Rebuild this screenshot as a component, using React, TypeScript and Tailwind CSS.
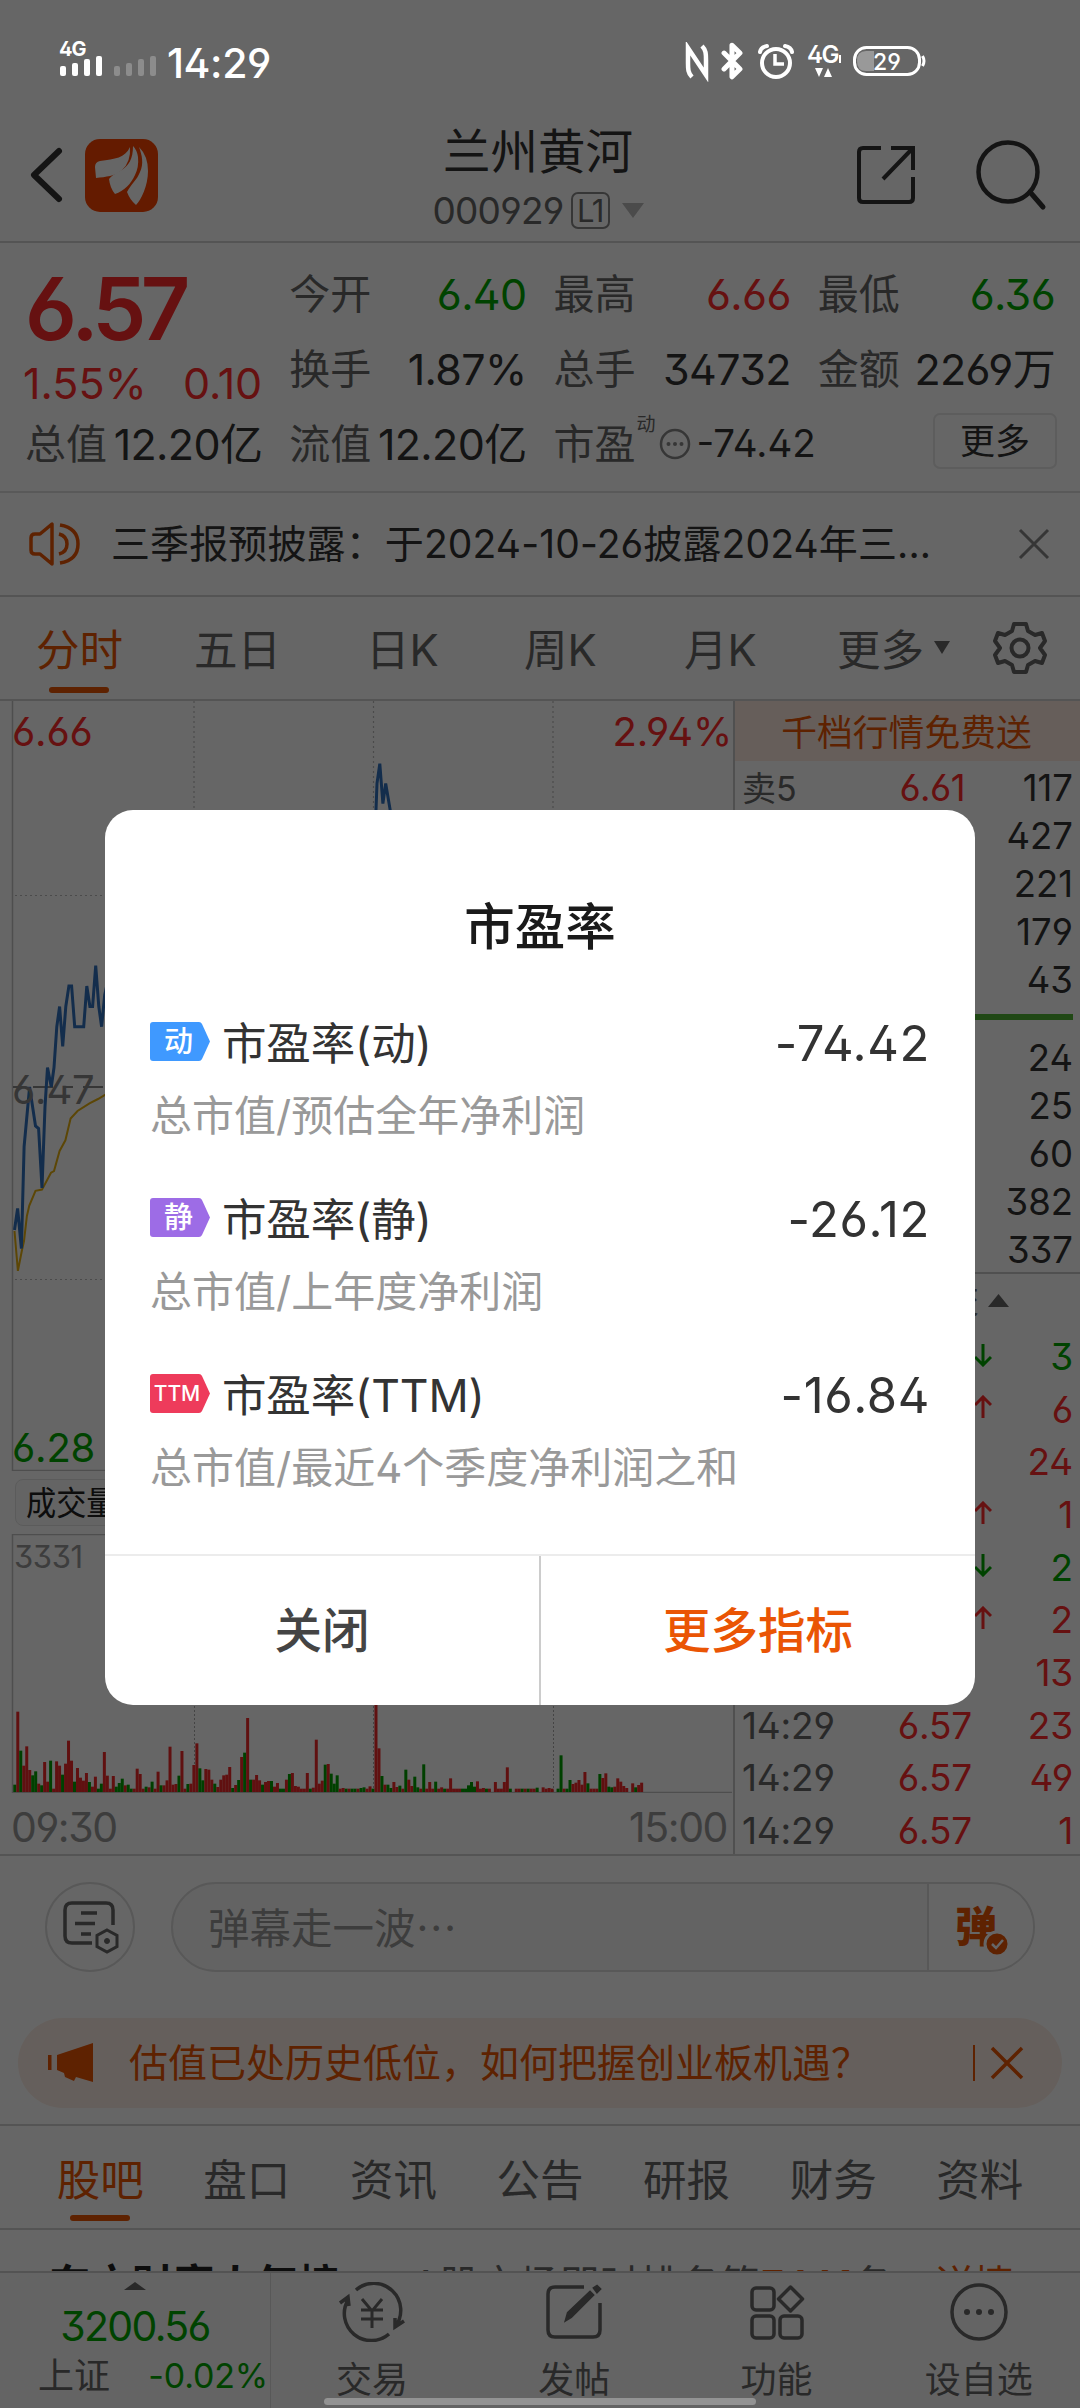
import { ChevronLeft, Bluetooth } from "lucide-react";
import type { ReactNode } from "react";

// one entry per minute: r = up, g = down, - = no trade, number = height in thirds of a px
const VOLUME = `g22 r241 g124 r79 r137 r66 g50 g62 r25 g20 r90 r31 g94 r10 r92 r79 g52 r85 r154 r94
g31 r72 r43 r34 r57 g30 r16 r46 g10 g25 r120 r49 r10 r48 g16 g27 g40 r20 g22 g10 r10 r70 r54 r10
g16 r14 g31 r10 r61 g20 r20 r35 r136 r22 r24 g49 r123 r10 g24 r25 r81 r146 g71 g35 r69 r67 r37 g25
r15 r37 r50 r52 r75 g12 r21 g36 r105 g118 r222 g37 r37 r51 r35 g22 r30 r33 g33 r16 r27 g10 g10 r37
g54 r57 r18 r16 r10 r10 r57 g10 r13 r157 r25 r34 g82 r84 g55 g25 g50 r10 r12 g10 r10 g10 g10 r10 g12
g14 r10 r17 g10 r420 r131 g48 r22 g22 g12 r30 r15 g19 r10 g67 r37 r18 g46 g14 r10 g83 r10 r30 r10
g31 r10 r14 g10 r10 r41 r10 r10 r10 g10 g10 g20 g30 g16 r32 r10 r12 g10 r10 - r30 r10 r10 r30 r74
g10 - r10 r10 g10 r10 g10 r10 r10 g13 - r14 r10 r12 r10 - g10 g110 r10 g10 g36 r24 r28 r36 r22 r60
g26 r10 r10 r10 g54 r42 r56 g16 g14 r16 r41 r31 r18 r12 - r26 g14 r21 r28`.split(/\s+/);

const PRICE_OPEN =
  "14.5,1230 17.6,1208.5 21.4,1248.5 24.1,1146.6 29.6,1087 35.5,1126 38.6,1128.6 42,1188 45,1106.7 47.5,1067.5 51.3,1087 54,1067.5 56.8,1026.7 59.6,1006.5 62.7,1046.5 65.8,1006.5 68.9,986 71.6,986 74.7,1026.7 83.7,1026.7 86.8,986 89.9,1006.5 92.6,1006.5 95.7,965.7 98.8,1006.5 101.6,1026.7 104.7,995 108,980";
const PRICE_NOON = "375,850 376,810 377,783.4 379.8,763.7 382.9,803.6 385.7,783.4 390.5,812 394,850";
const AVERAGE =
  "14.5,1231 17.9,1270.8 22,1250 24,1241 26.9,1216 29.3,1205.6 35.5,1190.8 42,1189.6 51,1172.7 54,1171 59.6,1151 65.4,1140.3 70.6,1118.5 77.5,1111 89.5,1103.3 98,1099 105,1095 112,1092";

const ASKS = [
  ["卖5", "6.61", "117"],
  ["卖4", "6.60", "427"],
  ["卖3", "6.59", "221"],
  ["卖2", "6.58", "179"],
  ["卖1", "6.57", "43"],
];
const BIDS = [
  ["买1", "6.56", "24"],
  ["买2", "6.55", "25"],
  ["买3", "6.54", "60"],
  ["买4", "6.53", "382"],
  ["买5", "6.52", "337"],
];
const TICKS = [
  { price: "6.56", dir: "down", vol: "3" },
  { price: "6.57", dir: "up", vol: "6" },
  { price: "6.56", dir: "", vol: "24" },
  { price: "6.57", dir: "up", vol: "1" },
  { price: "6.56", dir: "down", vol: "2" },
  { price: "6.57", dir: "up", vol: "2" },
  { price: "6.57", dir: "", vol: "13" },
  { price: "6.57", dir: "", vol: "23" },
  { price: "6.57", dir: "", vol: "49" },
  { price: "6.57", dir: "", vol: "1" },
];

const RATIOS = [
  { tag: "动", color: "#3f99ff", name: "市盈率(动)", value: "-74.42", desc: "总市值/预估全年净利润" },
  { tag: "静", color: "#9d6ce6", name: "市盈率(静)", value: "-26.12", desc: "总市值/上年度净利润" },
  { tag: "TTM", color: "#ee3b5b", name: "市盈率(TTM)", value: "-16.84", desc: "总市值/最近4个季度净利润之和" },
];

function Stat({ label, value, color = "text-[#333]" }: { label: string; value: string; color?: string }) {
  return (
    <div className="flex h-[75px] items-center justify-between whitespace-nowrap">
      <span className="text-[41px] text-[#666]">{label}</span>
      <span className={`text-[43px] tracking-[-0.015em] ${color}`}>{value}</span>
    </div>
  );
}

function StatusBar() {
  return (
    <div className="relative z-10 flex h-[110px] items-start text-white">
      <svg className="ml-[58px] mt-[36px]" width="100" height="42" viewBox="58 36 100 42" fill="#fff">
        <text x="59" y="56" fontSize="20" fontWeight="700" letterSpacing="-1">4G</text>
        <rect x="60" y="66" width="6" height="10" rx="2" />
        <rect x="72" y="63" width="6" height="13" rx="2" />
        <rect x="84" y="59" width="6" height="17" rx="2" />
        <rect x="96" y="56" width="6" height="20" rx="2" />
        <g fill="#8c8c8c">
          <rect x="114" y="66" width="6" height="10" rx="2" />
          <rect x="126" y="63" width="6" height="13" rx="2" />
          <rect x="138" y="59" width="6" height="17" rx="2" />
          <rect x="150" y="56" width="6" height="20" rx="2" />
        </g>
      </svg>
      <span className="ml-[9px] mt-[38px] w-[110px] text-[41px] font-medium leading-[50px] tracking-[-0.01em]">14:29</span>
      <svg className="ml-[406px] mt-[42px]" width="28" height="40" viewBox="683 42 28 40" fill="none" stroke="#fff" strokeWidth="4.5">
        <path d="M692 77c-4-4-4-8-4-14V48l18 27V60c0-6 0-10-4-14" />
      </svg>
      <Bluetooth className="ml-[2px] mt-[42px]" size={38} strokeWidth={3.2} />
      <svg className="ml-[5px] mt-[42px]" width="176" height="40" viewBox="758 42 176 40" fill="none" stroke="#fff">
        <circle cx="778" cy="63" r="14" strokeWidth="4" />
        <path d="M777 54v10h9" strokeWidth="3.5" />
        <path d="M762 52q1-5 7-6M794 52q-1-5-7-6" strokeWidth="4" strokeLinecap="round" />
        <text x="809" y="63" fontSize="24" fontWeight="600" letterSpacing="-1.5" fill="#fff" stroke="none">4G</text>
        <path d="M842 55v8" strokeWidth="2" />
        <path d="M817 68h8l-4 9zM826 77h8l-4-9z" fill="#fff" stroke="none" />
        <path d="M876 51h-8q-9 0-9 10t9 10h8z" fill="#999" stroke="none" />
        <rect x="856.500" y="47.500" width="65" height="27" rx="12" strokeWidth="3" />
        <path d="M924.500 56q3 5 0 10" strokeWidth="3" />
        <text x="889" y="69.500" fontSize="23" fontWeight="500" textAnchor="middle" fill="#fff" stroke="none">29</text>
      </svg>
    </div>
  );
}

function Header() {
  return (
    <div className="flex h-[133px] items-start border-b-2 border-[#d2d2d2]">
      <svg className="ml-[28px] mt-[36px]" width="36" height="58" viewBox="0 0 36 58" fill="none" stroke="#333" strokeWidth="6">
        <path d="M31 5 6 29l25 24" strokeLinecap="round" strokeLinejoin="round" />
      </svg>
      <svg className="ml-[21px] mt-[29px]" width="73" height="73" viewBox="0 0 73 73">
        <rect width="73" height="73" rx="15" fill="#fa4500" />
        <g fill="#fff">
          <path d="M45 8C40 19 30 20 15 22q-5 1-5 6l1 11c10-1 19-2 26-8q9-8 8-23z" />
          <path d="M48 7c0 13-4 20-13 25q-8 4-11 8 1 9 6 15c9-3 16-10 20-19q4-8 3-18-1-7-5-11z" />
          <path d="M54 8c3 8 5 17 1 25-3 8-9 12-13 20q3 8 9 13c5-5 12-19 12-34q0-15-9-24z" />
        </g>
      </svg>
      <div className="ml-[246px] mt-[18px] flex w-[268px] flex-col items-center">
        <h1 className="text-[47.500px] leading-[48px] text-[#333]">兰州黄河</h1>
        <div className="mt-[16px] flex h-[38px] items-center">
          <span className="text-[37px] tracking-[-0.02em] text-[#666]">000929</span>
          <span className="ml-[7px] flex h-[37px] w-[39px] items-center justify-center rounded-[7px] border-2 border-[#888] text-[31px] tracking-[-0.04em] text-[#666]">
            L1
          </span>
          <svg className="ml-[12px]" width="22" height="15" viewBox="0 0 22 15"><path d="M0 0h22L11 15z" fill="#bbb" /></svg>
        </div>
      </div>
      <svg className="ml-[184px] mt-[35px]" width="60" height="60" viewBox="857 145 60 60" fill="none" stroke="#333" strokeWidth="4">
        <path d="M882 148H864q-4 0-4 4v46q0 4 4 4h46q4 0 4-4v-21M892 148h22v22M913 149l-29 30" />
      </svg>
      <svg className="ml-[59px] mt-[29px]" width="74" height="74" viewBox="976 139 74 74" fill="none" stroke="#333" strokeWidth="4.500">
        <circle cx="1009" cy="172" r="29.500" />
        <path d="m1031 192 13 15" strokeWidth="5" strokeLinecap="round" />
      </svg>
    </div>
  );
}

function Quote() {
  return (
    <div className="grid h-[250px] grid-cols-4 gap-x-[27px] border-b-2 border-[#dedede] px-[25px] pt-[14px]">
      <div className="flex flex-col">
        <div className="h-[102px] pt-px text-[86px] font-semibold leading-[102px] tracking-[-0.065em] text-[#ff2b2b]">6.57</div>
        <div className="flex h-[48px] items-center justify-between text-[43px] text-[#ff2b2b]">
          <span className="-ml-[2px]">1.55%</span>
          <span>0.10</span>
        </div>
        <Stat label="总值" value="12.20亿" />
      </div>
      <div>
        <Stat label="今开" value="6.40" color="text-[#00a800]" />
        <Stat label="换手" value="1.87%" />
        <Stat label="流值" value="12.20亿" />
      </div>
      <div>
        <Stat label="最高" value="6.66" color="text-[#ff2b2b]" />
        <Stat label="总手" value="34732" />
        <div className="flex h-[75px] items-center whitespace-nowrap">
          <span className="text-[41px] text-[#666]">市盈</span>
          <span className="mb-[38px] ml-px text-[19px] text-[#666]">动</span>
          <svg className="ml-[3px] shrink-0" width="32" height="32" viewBox="0 0 32 32" fill="#888">
            <circle cx="16" cy="16" r="14" fill="none" stroke="#888" strokeWidth="2.500" />
            <circle cx="9.500" cy="16" r="2" /><circle cx="16" cy="16" r="2" /><circle cx="22.500" cy="16" r="2" />
          </svg>
          <span className="ml-[6px] text-[38.500px] text-[#333]">-74.42</span>
        </div>
      </div>
      <div>
        <Stat label="最低" value="6.36" color="text-[#00a800]" />
        <Stat label="金额" value="2269万" />
        <div className="flex h-[68px] items-center justify-end">
          <button className="-mr-[2px] h-[56px] w-[124px] rounded-[7px] border-2 border-[#e8e8e8] text-[35px] leading-[48px] text-[#333]">更多</button>
        </div>
      </div>
    </div>
  );
}

function Notice() {
  return (
    <div className="flex h-[105px] items-center border-b-2 border-[#d2d2d2]">
      <svg className="ml-[28px]" width="54" height="48" viewBox="0 0 54 48" fill="none" stroke="#ea5504" strokeWidth="3.500">
        <path d="M24 4v40L12 34H7q-4 0-4-4V18q0-4 4-4h5z" strokeLinejoin="round" />
        <path d="M31 14q8 2 8 10t-8 10M32 5q18 3 18 19T32 43" />
      </svg>
      <span className="ml-[29px] w-[860px] whitespace-nowrap text-[39px] tracking-[0.003em] text-[#333]">
        三季报预披露：于2024-10-26披露2024年三...
      </span>
      <svg className="ml-[47px]" width="32" height="32" viewBox="0 0 32 32" stroke="#888" strokeWidth="3"><path d="m2 2 28 28M30 2 2 30" /></svg>
    </div>
  );
}

function PeriodTabs() {
  return (
    <div className="flex h-[104px] items-center border-b-2 border-[#d2d2d2] pt-[4px] text-[43.500px] text-[#666]">
      <div className="relative ml-[36px] w-[158px] leading-[90px] text-[#ea5504]">
        分时
        <span className="absolute bottom-[2px] left-[13px] h-[6px] w-[60px] rounded-full bg-[#ea5504]" />
      </div>
      <span className="w-[172px]">五日</span>
      <span className="w-[158px]">日K</span>
      <span className="w-[160px]">周K</span>
      <span className="w-[153px]">月K</span>
      <span className="w-[97px]">更多</span>
      <svg className="-mt-[6px]" width="16" height="13" viewBox="0 0 16 13" fill="#666"><path d="M0 0h16L8 13z" /></svg>
      <svg className="-mt-[4px] ml-[42px]" width="56" height="56" viewBox="-28 -28 56 56" fill="none" stroke="#666" strokeWidth="4">
        <path d="M-6-24H6l2 7 7 4 7-2 3 8-5 7 5 7-3 8-7-2-7 4-2 7H-6l-2-7-7-4-7 2-3-8 5-7-5-7 3-8 7 2 7-4z" strokeLinejoin="round" />
        <circle r="8.500" />
      </svg>
    </div>
  );
}

function PriceChart() {
  return (
    <svg className="block" width="733" height="770" viewBox="0 701 733 770" fill="none">
      <g stroke="#bbb" strokeWidth="1.200" strokeDasharray="2 3">
        <path d="M194 701v770M373.500 701v770M553 701v770M15 895.500h719M15 1279.500h719" />
      </g>
      <path d="M12.500 701v769.500H732" stroke="#c4c4c4" strokeWidth="1.500" />
      <path d="M13 1087H734" stroke="#888" strokeWidth="2" strokeDasharray="10 10 20 10" />
      <polyline points={AVERAGE} stroke="#e5b010" strokeWidth="2" />
      <polyline points={PRICE_OPEN} stroke="#3070bd" strokeWidth="3" />
      <polyline points={PRICE_NOON} stroke="#3070bd" strokeWidth="3" />
      <g fontSize="40" letterSpacing="-.2">
        <text x="12" y="746" fill="#ff2b2b">6.66</text>
        <text x="732" y="746" fill="#ff2b2b" textAnchor="end">2.94%</text>
        <text x="12" y="1104" fill="#888">6.47</text>
        <text x="12" y="1462" fill="#00a800">6.28</text>
      </g>
    </svg>
  );
}

function VolumeChart() {
  return (
    <svg className="block" width="733" height="259" viewBox="0 1534 733 259">
      <path d="M194.500 1534v258M373.500 1534v258M553.500 1534v258" stroke="#aaa" strokeDasharray="2 2" />
      <path d="M732 1534.500H12.500V1792.500H732" fill="none" stroke="#c4c4c4" strokeWidth="1.500" />
      <text x="14" y="1568" fontSize="31" letterSpacing="-.4" fill="#999">3331</text>
      {VOLUME.map((v, i) => {
        if (v === "-") return null;
        const h = Number(v.slice(1)) / 3;
        return <rect key={i} x={13.3 + i * 2.985} y={1792 - h} width="3" height={h} fill={v[0] === "r" ? "#f02a2a" : "#00a000"} />;
      })}
    </svg>
  );
}

function BookRow({ row }: { row: string[] }) {
  return (
    <div className="flex h-[48px] items-center text-[36.500px] text-[#333]">
      <span className="w-[126px] text-[34px] text-[#666]">{row[0]}</span>
      <span className="w-[97px] text-right tracking-[-0.015em] text-[#ff2b2b]">{row[1]}</span>
      <span className="flex-1 text-right">{row[2]}</span>
    </div>
  );
}

function OrderBook() {
  return (
    <div className="h-full w-[347px] border-l-2 border-[#c8c8c8]">
      <div className="flex h-[60px] items-center justify-center bg-[#ffece2] pr-[2px] pt-1 text-[35.800px] text-[#ea5504]">千档行情免费送</div>
      <div className="pl-[7px] pr-[7px] pt-[3px]">
        {ASKS.map((r) => <BookRow key={r[0]} row={r} />)}
        <div className="mb-[14px] mt-[10px] h-[6px] bg-[#51b435]" />
        {BIDS.map((r) => <BookRow key={r[0]} row={r} />)}
      </div>
      <div className="-mt-[2px] flex h-[58px] items-center justify-end border-t-2 border-[#c8c8c8] pb-[4px] pr-[71px] text-[34px] text-[#666]">
        成交
        <svg className="ml-[9px]" width="21" height="13" viewBox="0 0 21 13" fill="#666"><path d="M10.500 0 21 13H0z" /></svg>
      </div>
      <div className="pl-[7px] pr-[7px]">
        {TICKS.map((t, i) => {
          const color = t.dir === "down" ? "text-[#00a800]" : "text-[#ff2b2b]";
          return (
            <div key={i} className={`flex h-[52.700px] items-center text-[37px] tracking-[-0.005em] ${color}`}>
              <span className="w-[128px] text-[#666]">14:29</span>
              <span className="w-[102px] text-right">{t.price}</span>
              <svg className="ml-[2px] -mt-[4px]" width="18" height="24" viewBox="0 0 18 24" fill="none" stroke="currentColor" strokeWidth="3">
                {t.dir === "up" && <path d="M9 23V3M1 10l8-8 8 8" />}
                {t.dir === "down" && <path d="M9 1v20M1 14l8 8 8-8" />}
              </svg>
              <span className="flex-1 text-right">{t.vol}</span>
            </div>
          );
        })}
      </div>
    </div>
  );
}

function CommentBar() {
  return (
    <div className="flex h-[162px] items-start pt-[26px]">
      <div className="ml-[45px] flex size-[90px] items-center justify-center rounded-full border-2 border-[#dcdcdc]">
        <svg width="58" height="54" viewBox="62 1903 58 54" fill="none" stroke="#666" strokeWidth="3.500">
          <path d="M93 1946H73q-7 0-7-7v-26q0-7 7-7h34q7 0 7 7v15" />
          <path d="M82 1916h16M76 1926.500h20M82 1937h10" />
          <path d="m108 1933 10 5.500v11l-10 5.500-10-5.500v-11z" strokeWidth="3" />
          <circle cx="108" cy="1944" r="2.500" fill="#666" strokeWidth="1" />
        </svg>
      </div>
      <div className="ml-[36px] flex h-[90px] w-[864px] items-center overflow-hidden rounded-full border-2 border-[#dcdcdc] bg-[#f8f8f8]">
        <span className="w-[754px] pl-[35px] pt-[4px] text-[41.500px] text-[#999]">弹幕走一波⋯</span>
        <div className="relative h-full flex-1 border-l-2 border-[#dcdcdc] bg-white pl-[26px] text-[42px] font-black leading-[85px] text-[#ea5504]">
          弹
          <svg className="absolute left-[54px] top-[46px]" width="28" height="28" viewBox="0 0 28 28" fill="none">
            <circle cx="14" cy="14" r="12" fill="#ea5504" stroke="#fff" strokeWidth="3" />
            <path d="m9 14 4 4 7-8" stroke="#fff" strokeWidth="2.500" />
          </svg>
        </div>
      </div>
    </div>
  );
}

function PromoBanner() {
  return (
    <div className="h-[108px] border-b-2 border-[#d2d2d2]">
      <div className="mx-[18px] flex h-[90px] items-center rounded-full bg-[#fdeee5] text-[#ea5504]">
        <svg className="ml-[29px]" width="48" height="42" viewBox="47 2042 48 42" fill="#ea5504">
          <path d="M48 2055h3.500v15H48zM57 2055l36-12v39l-17-5-2 4-9-4-1-4-7-3z" />
        </svg>
        <span className="ml-[34px] w-[844px] pt-px text-[39px]">估值已处历史低位，如何把握创业板机遇？</span>
        <span className="h-[36px] w-[2px] bg-[#ea5504]" />
        <svg className="ml-[15px]" width="34" height="34" viewBox="0 0 34 34" stroke="#ea5504" strokeWidth="3.500"><path d="m2 2 30 30M32 2 2 32" /></svg>
      </div>
    </div>
  );
}

function SectionTabs() {
  return (
    <div className="flex h-[104px] border-b-2 border-[#d2d2d2] px-[27px] text-[43.500px] text-[#666]">
      {["股吧", "盘口", "资讯", "公告", "研报", "财务", "资料"].map((t, i) => (
        <div key={t} className={i === 0 ? "flex flex-1 flex-col items-center text-[#ea5504]" : "flex flex-1 flex-col items-center"}>
          <span className="leading-[109px]">{t}</span>
          {i === 0 && <span className="-mt-[20px] h-[6px] w-[60px] rounded-full bg-[#ea5504]" />}
        </div>
      ))}
    </div>
  );
}

function NavItem({ label, children }: { label: string; children: ReactNode }) {
  return (
    <div className="flex flex-1 flex-col items-center pt-[9px]">
      <svg width="70" height="60" viewBox="-35 -30 70 60" fill="none" stroke="#666" strokeWidth="3.500">{children}</svg>
      <span className="mt-[14px] text-[36px] leading-[48px] text-[#666]">{label}</span>
    </div>
  );
}

function BottomNav() {
  return (
    <div className="flex h-[137px] border-t-2 border-[#cfcfcf] bg-[#fafafa]">
      <div className="flex w-[271px] flex-col items-center border-r border-[#dcdcdc]">
        <svg className="mt-[9px]" width="22" height="8" viewBox="0 0 22 8" fill="#666"><path d="M11 0 22 8H0z" /></svg>
        <span className="mt-[11px] text-[41px] leading-[50px] tracking-[-0.04em] text-[#00a800]">3200.56</span>
        <div className="flex w-full items-center justify-between pl-[38px] pr-[2px] leading-[50px]">
          <span className="text-[36px] text-[#666]">上证</span>
          <span className="text-[34px] tracking-[-0.005em] text-[#00a800]">-0.02%</span>
        </div>
      </div>
      <NavItem label="交易">
        <path d="M-16-22a27 27 0 0 1 39 37M17 22a27 27 0 0 1-41-34M-32-9l8-6 1 9M32 9l-9 6v-9" />
        <path d="m-10-13 10 12 10-12M0-1v17M-11-2h22M-11 7h22" strokeWidth="3" />
      </NavItem>
      <NavItem label="发帖">
        <path d="M10-25h-29q-7 0-7 7v36q0 7 7 7h38q7 0 7-7v-27" />
        <path d="M-8 8-6 1 16-20l3 3L-3 5zM20-24l3-2 3 3-3 3z" fill="#666" strokeWidth="2.500" />
      </NavItem>
      <NavItem label="功能">
        <rect x="-25" y="-24" width="22" height="22" rx="4" />
        <rect x="-25" y="4" width="22" height="22" rx="4" />
        <rect x="3" y="4" width="22" height="22" rx="4" />
        <path d="m13.500-25 12 12-12 12-12-12z" strokeLinejoin="round" />
      </NavItem>
      <NavItem label="设自选">
        <circle r="27" />
        <g fill="#666" stroke="none"><circle cx="-12" r="3" /><circle r="3" /><circle cx="12" r="3" /></g>
      </NavItem>
    </div>
  );
}

function RatioDialog() {
  return (
    <div className="absolute left-[105px] top-[810px] flex h-[895px] w-[870px] flex-col overflow-hidden rounded-[28px] bg-white">
      <h2 className="pt-[82px] text-center text-[50.500px] font-medium leading-[70px] text-[#1a1a1a]">市盈率</h2>
      <div className="flex-1 px-[45px] pt-[47px]">
        {RATIOS.map((r) => (
          <div key={r.tag} className="h-[176px]">
            <div className="flex h-[70px] items-center">
              <svg className="-mt-[6px]" width="60" height="39" viewBox="0 0 60 39">
                <path d="M3 0h46q2 0 3 2l8 17.500L52 37q-1 2-3 2H3q-3 0-3-3V3q0-3 3-3z" fill={r.color} />
                <text x={r.tag === "TTM" ? 27 : 28.5} y={r.tag === "TTM" ? 27 : 30} fontSize={r.tag === "TTM" ? 21 : 29} fontWeight="500" textAnchor="middle" fill="#fff">
                  {r.tag}
                </text>
              </svg>
              <span className="ml-[12px] text-[44.500px] tracking-[-0.003em] text-[#333]">{r.name}</span>
              <span className="ml-auto text-[49px] tracking-[0.012em] text-[#333]">{r.value}</span>
            </div>
            <p className="mt-[11px] text-[42px] leading-[52px] text-[#999]">{r.desc}</p>
          </div>
        ))}
      </div>
      <div className="flex h-[151px] border-t-2 border-[#ececec] text-[47.500px] font-medium">
        <button className="flex-1 border-r-2 border-[#ccc] text-[#444]">关闭</button>
        <button className="flex-1 text-[#ea5504]">更多指标</button>
      </div>
    </div>
  );
}

export default function App() {
  return (
    <div
      lang="zh-CN"
      className="relative flex h-[2408px] w-[1080px] flex-col overflow-hidden bg-white font-['Inter','Noto_Sans_CJK_SC',sans-serif] [font-feature-settings:'ss01']"
    >
      <StatusBar />
      <Header />
      <Quote />
      <Notice />
      <PeriodTabs />
      <div className="flex h-[1155px] border-b-2 border-[#d2d2d2]">
        <div className="w-[733px]">
          <PriceChart />
          <div className="flex h-[63px] items-center pl-[15px]">
            <div className="h-[47px] w-[140px] rounded-[8px] border border-[#e4e4e4] bg-[#fafafa] pl-[10px]">
              <span className="block origin-left scale-x-[.9] text-[33.500px] leading-[46px] text-[#222]">成交量</span>
            </div>
          </div>
          <VolumeChart />
          <div className="flex justify-between pl-[11px] pr-[6px] pt-[9px] text-[41px] leading-[50px] tracking-[-0.035em] text-[#999]">
            <span>09:30</span>
            <span>15:00</span>
          </div>
        </div>
        <OrderBook />
      </div>
      <CommentBar />
      <PromoBanner />
      <SectionTabs />
      <div className="flex h-[41px] items-start overflow-hidden whitespace-nowrap pl-[49px] pt-[25px] text-[40px] leading-[60px]">
        <b className="w-[363px] text-[41.500px] text-[#222]">东方财富人气榜</b>
        <span className="w-[522px] text-[#666]">
          A股市场即时排名第<b className="text-[#ea5504]">3661</b>名
        </span>
        <span className="text-[#ea5504]">详情&gt;</span>
      </div>
      <BottomNav />

      <div className="absolute inset-0 bg-black/60" />
      <RatioDialog />
      <div className="absolute bottom-[3px] left-[324px] h-[7px] w-[432px] rounded-full bg-[#939393]" />
    </div>
  );
}
